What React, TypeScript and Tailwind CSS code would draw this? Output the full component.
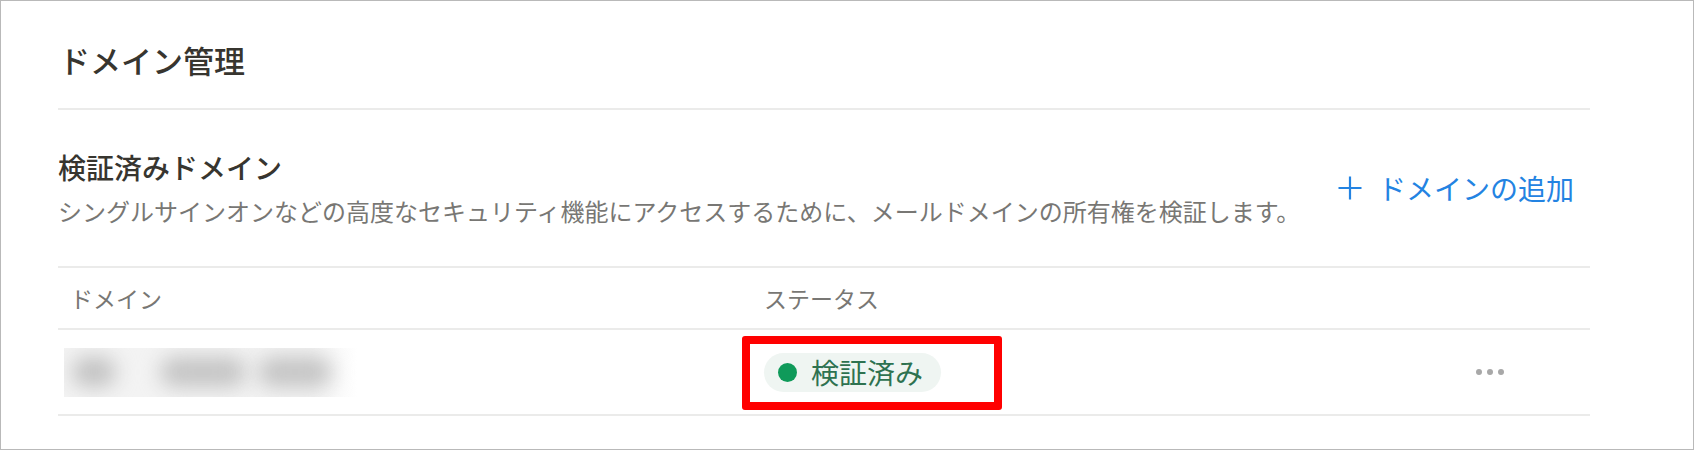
const font = { fontFamily: '"Noto Sans CJK JP", "Noto Sans", sans-serif' }

function PlusIcon() {
  return (
    <svg width="24" height="24" viewBox="0 0 24 24" fill="none" stroke="currentColor" strokeWidth="2.2">
      <path d="M12 0.5V23.5M0.5 12H23.5" />
    </svg>
  )
}

function BlurredDomain() {
  return (
    <div className="relative flex h-[49px] w-[293px] items-center overflow-hidden bg-gradient-to-r from-[#f3f3f3] via-[#f3f3f3] via-85% to-white">
      <div className="ml-[8px] h-[30px] w-[44px] rounded-full bg-[#c2c2c2] blur-[10px]" />
      <div className="ml-[44px] h-[30px] w-[86px] rounded-full bg-[#c4c4c4] blur-[10px]" />
      <div className="ml-[12px] h-[30px] w-[74px] rounded-full bg-[#c4c4c4] blur-[10px]" />
    </div>
  )
}

export default function App() {
  return (
    <div className="h-[450px] w-[1694px] border border-[#b9b9b9] bg-white" style={font}>
      <div className="ml-[57px] w-[1532px]">
        <div className="h-[109px] border-b-2 border-[#ebebea] pt-[39px]">
          <h1 className="pl-px text-[31px] leading-[40px] font-medium text-[#37352f]">ドメイン管理</h1>
        </div>

        <div className="flex h-[158px] items-center justify-between border-b-2 border-[#ebebea]">
          <div className="flex flex-col gap-[10px]">
            <h2 className="text-[28px] leading-[36px] font-medium text-[#37352f]">検証済みドメイン</h2>
            <p className="text-[24px] leading-[32px] text-[#787774]">
              シングルサインオンなどの高度なセキュリティ機能にアクセスするために、メールドメインの所有権を検証します。
            </p>
          </div>
          <button className="flex items-center gap-[16px] px-4 text-[28px] leading-[36px] text-[#2383e2]">
            <PlusIcon />
            ドメインの追加
          </button>
        </div>

        <div className="grid h-[62px] grid-cols-[694px_1fr_200px] items-center border-b-2 border-[#ebebea] text-[23px] leading-[32px] text-[#787774]">
          <div className="pl-3">ドメイン</div>
          <div className="pl-3">ステータス</div>
          <div />
        </div>

        <div className="grid h-[86px] grid-cols-[694px_1fr_200px] items-center border-b-2 border-[#ebebea]">
          <div className="pl-[6px]">
            <BlurredDomain />
          </div>
          <div className="relative flex h-full items-center pl-3">
            <span className="flex h-[39px] items-center gap-[14px] rounded-full bg-[#eff5f2] pr-[18px] pl-[14px]">
              <span className="h-[19px] w-[19px] rounded-full bg-[#0f9a5a]" />
              <span className="text-[28px] leading-[36px] text-[#2e7250]">検証済み</span>
            </span>
            {/* annotation box */}
            <div className="absolute top-[6px] left-[-10px] h-[74px] w-[260px] rounded-[3px] border-8 border-[#ff0000]" />
          </div>
          <div className="flex justify-center gap-[5px]">
            <span className="h-[6px] w-[6px] rounded-full bg-[#a8a8a8]" />
            <span className="h-[6px] w-[6px] rounded-full bg-[#a8a8a8]" />
            <span className="h-[6px] w-[6px] rounded-full bg-[#a8a8a8]" />
          </div>
        </div>
      </div>
    </div>
  )
}
